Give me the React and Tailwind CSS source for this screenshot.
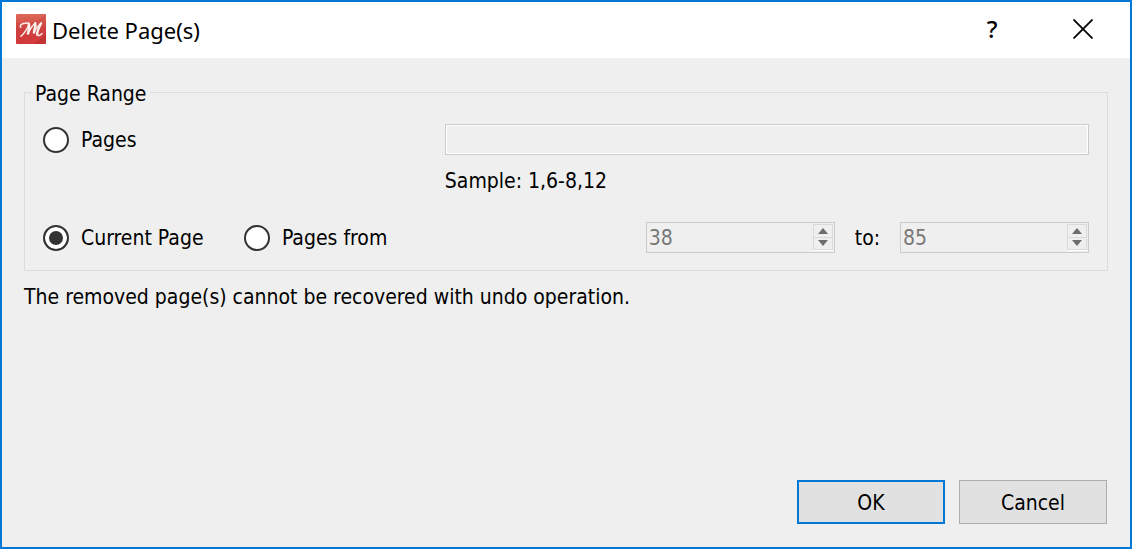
import { useState } from "react";

const RADIO =
  "h-[26px] w-[26px] shrink-0 appearance-none rounded-full border-2 border-[#333333] bg-white checked:bg-[#333333] checked:shadow-[inset_0_0_0_4px_white]";

const FIELD = "h-[31px] border border-[#cccccc] bg-[#efefef]";

function AppIcon() {
  return (
    <svg viewBox="0 0 30 30" className="mb-0.5 h-[30px] w-[30px] shrink-0" aria-hidden="true">
      <defs>
        <linearGradient id="tile" x1="0" y1="0" x2="0" y2="1">
          <stop offset="0" stopColor="#dc6a58" />
          <stop offset="0.5" stopColor="#d24543" />
          <stop offset="1" stopColor="#d63a3c" />
        </linearGradient>
      </defs>
      <rect width="30" height="30" rx="1" fill="url(#tile)" />
      <path d="M0 8C10 12 22 8 30 0V17C22 24 14 28 5 30H0Z" fill="#b93034" opacity="0.2" />
      <path d="M17 30Q27 25 30 17V29L29 30Z" fill="#b52d32" opacity="0.6" />
      <g fill="none" stroke="#fdeeea" strokeLinecap="round" strokeLinejoin="round">
        <path strokeWidth="1.5" d="M4.8 13.2C3.2 11.5 5.5 9.6 9 9.2C11 8.9 12.8 9 13 9.6C12 13.5 9 18.5 5 22.3" />
        <path strokeWidth="2.6" d="M12.8 9.8C13.6 12.5 13 16 12 19.5" />
        <path strokeWidth="1.4" d="M12 19.5C14 15.5 16.5 11.5 19.2 9" />
        <path strokeWidth="2.6" d="M19.2 9.2C19.8 12 18.6 15 18 18.5" />
        <path strokeWidth="1.4" d="M18 18.5C20 14.5 22.5 10.8 25.5 9" />
        <path strokeWidth="2.4" d="M25 9.4C23.2 13 20.8 18 21.2 20.5" />
        <path strokeWidth="1.5" d="M21.2 20.5C21.7 22.3 24 21.5 26 19.5" />
      </g>
    </svg>
  );
}

function SpinBox({ label, value, onChange, disabled }) {
  return (
    <div className={`flex min-w-0 pr-px ${FIELD}`}>
      <input
        type="text"
        inputMode="numeric"
        aria-label={label}
        value={value}
        disabled={disabled}
        onChange={(e) => onChange(Number(e.target.value) || 1)}
        className="w-full min-w-0 flex-1 bg-transparent pl-0.5 text-black disabled:text-[#787878]"
      />
      <div className="mt-px mb-0.5 flex w-5 shrink-0 flex-col divide-y divide-[#dadada] border border-[#dadada] shadow-[0_1px_0_white]">
        <button
          type="button"
          aria-label={`Increase ${label}`}
          disabled={disabled}
          onClick={() => onChange(value + 1)}
          className="flex flex-1 items-center justify-center"
        >
          <svg viewBox="0 0 10 6" className="h-[6px] w-[10px]" fill="#6d6d6d">
            <path d="M5 0L10 6H0Z" />
          </svg>
        </button>
        <button
          type="button"
          aria-label={`Decrease ${label}`}
          disabled={disabled}
          onClick={() => onChange(Math.max(1, value - 1))}
          className="flex flex-1 items-center justify-center"
        >
          <svg viewBox="0 0 10 6" className="h-[6px] w-[10px]" fill="#6d6d6d">
            <path d="M0 0H10L5 6Z" />
          </svg>
        </button>
      </div>
    </div>
  );
}

function RangeOption({ id, label, range, setRange }) {
  return (
    <label className="flex items-center gap-3 whitespace-nowrap">
      <input
        type="radio"
        name="range"
        value={id}
        checked={range === id}
        onChange={() => setRange(id)}
        className={RADIO}
      />
      {label}
    </label>
  );
}

export default function App() {
  const [range, setRange] = useState("current");
  const [pages, setPages] = useState("");
  const [from, setFrom] = useState(38);
  const [to, setTo] = useState(85);

  return (
    <div
      role="dialog"
      aria-labelledby="dialog-title"
      className="flex min-h-screen flex-col border-2 border-[#0078d7] bg-[#efefef] font-['DejaVu_Sans_Condensed','Noto_Sans',sans-serif] text-[21px] leading-7 text-black"
    >
      <header className="flex h-14 items-center bg-white pl-[14px] font-['Noto_Sans',sans-serif]">
        <AppIcon />
        <h1 id="dialog-title" className="ml-1.5 flex-1 text-[22px]">
          Delete Page(s)
        </h1>
        <button
          type="button"
          aria-label="Help"
          className="flex h-full w-[92px] items-center justify-center pb-0.5 text-2xl font-medium"
        >
          ?
        </button>
        <button type="button" aria-label="Close" className="flex h-full w-[92px] items-center justify-center pr-0.5 pb-0.5">
          <svg viewBox="0 0 20 20" className="h-5 w-5" fill="none" stroke="#000" strokeWidth="1.8">
            <path d="M0.5 0.5L19.5 19.5M19.5 0.5L0.5 19.5" />
          </svg>
        </button>
      </header>

      <main className="flex flex-1 flex-col px-[22px] pt-[18px] pb-[23px]">
        <fieldset className="border border-[#dcdcdc] px-[18px] pb-[17px]">
          <legend className="-ml-[11px] px-[3px] pt-1">Page Range</legend>
          <div className="mt-4 grid grid-cols-[181fr_181fr_181fr_189fr_auto_189fr] items-center gap-x-5">
            <div className="col-span-2">
              <RangeOption id="pages" label="Pages" range={range} setRange={setRange} />
            </div>
            <input
              type="text"
              aria-label="Pages"
              value={pages}
              disabled={range !== "pages"}
              onChange={(e) => setPages(e.target.value)}
              className={`col-span-4 px-[3px] shadow-[inset_0_0_0_1px_white] ${FIELD}`}
            />
            <p className="col-span-4 col-start-3 mt-3 mb-[27px]">Sample: 1,6-8,12</p>
            <RangeOption id="current" label="Current Page" range={range} setRange={setRange} />
            <RangeOption id="from" label="Pages from" range={range} setRange={setRange} />
            <div className="col-start-4">
              <SpinBox label="first page" value={from} onChange={setFrom} disabled={range !== "from"} />
            </div>
            <span>to:</span>
            <SpinBox label="last page" value={to} onChange={setTo} disabled={range !== "from"} />
          </div>
        </fieldset>

        <p className="mt-3">The removed page(s) cannot be recovered with undo operation.</p>

        <div className="mt-auto flex justify-end gap-[14px] pr-px">
          <button type="button" className="h-11 w-[148px] border-2 border-[#0078d7] bg-[#e1e1e1] pt-0.5">
            OK
          </button>
          <button type="button" className="h-11 w-[148px] border border-[#adadad] bg-[#e1e1e1] pt-0.5">
            Cancel
          </button>
        </div>
      </main>
    </div>
  );
}
